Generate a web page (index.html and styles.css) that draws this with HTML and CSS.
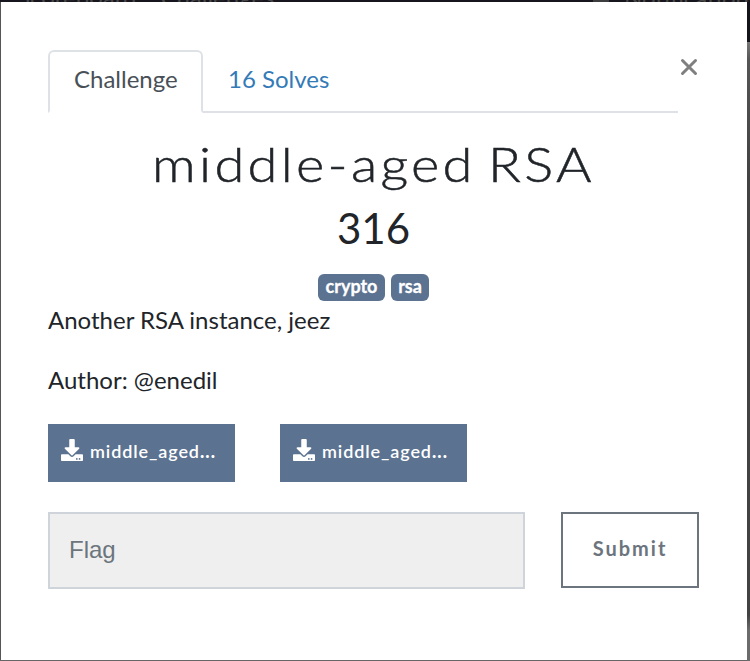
FILE: index.html
```html
<!DOCTYPE html>
<html lang="en">
<head>
<meta charset="utf-8">
<title>middle-aged RSA</title>
<link rel="stylesheet" href="styles.css">
</head>
<body>
<div class="backdrop-nav" aria-hidden="true"><span class="nav-left"><span>Scoreboard</span><span>Challenges</span></span><span class="nav-dot"></span><span class="nav-right">Notifications</span></div>
<main class="modal">
  <header class="top">
    <nav class="tabs">
      <a class="tab active">Challenge</a>
      <a class="tab">16 Solves</a>
    </nav>
    <button class="close" aria-label="Close"><svg width="18" height="18" viewBox="0 0 18 18"><path d="M2.5 2.5L15.5 15.5M15.5 2.5L2.5 15.5"/></svg></button>
  </header>
  <h2 class="name">middle-aged RSA</h2>
  <h3 class="value">316</h3>
  <div class="tags"><span class="tag crypto">crypto</span><span class="tag rsa">rsa</span></div>
  <div class="description">
    <p>Another RSA instance, jeez</p>
    <p>Author: @enedil</p>
  </div>
  <div class="files">
    <a class="file"><svg width="22" height="22" viewBox="0 0 512 512"><path d="M216 0h80c13 0 24 11 24 24v168h88c18 0 27 21 14 34L270 378c-8 8-20 8-28 0L90 226c-13-13-4-34 14-34h88V24c0-13 11-24 24-24zm296 376v112c0 13-11 24-24 24H24c-13 0-24-11-24-24V376c0-13 11-24 24-24h147l49 49c20 20 52 20 72 0l49-49h147c13 0 24 11 24 24zM388 464a20 20 0 1 0-40 0 20 20 0 1 0 40 0zm64 0a20 20 0 1 0-40 0 20 20 0 1 0 40 0z"/></svg><span class="filename">middle_aged<b>...</b></span></a>
    <a class="file"><svg width="22" height="22" viewBox="0 0 512 512"><path d="M216 0h80c13 0 24 11 24 24v168h88c18 0 27 21 14 34L270 378c-8 8-20 8-28 0L90 226c-13-13-4-34 14-34h88V24c0-13 11-24 24-24zm296 376v112c0 13-11 24-24 24H24c-13 0-24-11-24-24V376c0-13 11-24 24-24h147l49 49c20 20 52 20 72 0l49-49h147c13 0 24 11 24 24zM388 464a20 20 0 1 0-40 0 20 20 0 1 0 40 0zm64 0a20 20 0 1 0-40 0 20 20 0 1 0 40 0z"/></svg><span class="filename">middle_aged<b>...</b></span></a>
  </div>
  <form class="answer">
    <input class="flag" type="text" placeholder="Flag">
    <button class="submit" type="button">Submit</button>
  </form>
</main>
</body>
</html>
```

FILE: styles.css
```css
* { box-sizing: border-box; }
body {
  margin: 0;
  height: 661px;
  padding: 2px 3px 1px 1px;
  overflow: hidden;
  position: relative;
  background: linear-gradient(#14151c 42px, #777 42px, #555 60px, #424242 180px, #424242 615px, #6b6b6b 630px);
  font-family: Lato, "Liberation Sans", sans-serif;
  font-size: 24px;
  color: #212529;
}
.backdrop-nav {
  position: absolute;
  inset: 0 0 auto 0;
  height: 2px;
  overflow: hidden;
  background: #17151d;
  color: #484848;
  font-size: 24px;
  line-height: 24px;
}
.nav-left { position: absolute; left: 17px; top: -15px; display: flex; gap: 24px; }
.nav-dot { position: absolute; left: 593px; top: 0; width: 16px; height: 2px; background: #3d3d3f; }
.nav-right { position: absolute; left: 624px; top: -14px; }
.modal {
  position: relative;
  height: 658px;
  padding: 48px 48px 0 47px;
  background: #fff;
  box-shadow: 0 1px 0 #666, -1px 0 0 #555;
}
.top { display: flex; justify-content: space-between; height: 63px; }
.tabs { display: flex; width: 630px; border-bottom: 2px solid #dee2e6; }
.tab {
  height: 63px;
  padding: 0 24px;
  border: 2px solid transparent;
  border-radius: 6px 6px 0 0;
  line-height: 54px;
  color: #337ab7;
  white-space: nowrap;
}
.tab.active { width: 155px; border-color: #dee2e6 #dee2e6 #fff; background: #fff; color: #495057; }
.tab:last-child { margin-left: -1px; }
.close { height: 18px; width: 18px; margin: 8px 1px 0 0; padding: 0; border: 0; background: none; }
.close svg { display: block; stroke: #7f7f7f; stroke-width: 3; fill: none; stroke-linecap: round; }
.name {
  margin: 22px 0 0;
  height: 58px;
  line-height: 58px;
  font-size: 48px;
  font-weight: 300;
  letter-spacing: 2.9px;
  word-spacing: -5px;
  text-align: center;
  white-space: nowrap;
  transform: scaleX(1.13);
  -webkit-text-stroke: 0.5px #212529;
}
.value { margin: 9px 0 0; height: 52px; line-height: 52px; font-size: 42px; font-weight: 400; text-align: center; }
.tags { display: flex; justify-content: center; gap: 6px; margin-top: 20px; }
.tag {
  height: 27px;
  border-radius: 6px;
  background: #5b7290;
  color: #fff;
  font-size: 18px;
  font-weight: 700;
  line-height: 25px;
  text-align: center;
  -webkit-text-stroke: 0.3px #fff;
}
.crypto { width: 67px; }
.rsa { width: 38px; }
.description p { margin: 0 0 24px; height: 36px; line-height: 38px; }
.files { display: flex; gap: 45px; margin-top: 27px; }
.file {
  display: flex;
  gap: 7px;
  width: 187px;
  height: 58px;
  padding: 15px 0 0 13px;
  background: #5b7290;
  color: #fff;
}
.file svg { flex: none; fill: #fff; }
.filename { font-size: 18px; font-weight: 600; line-height: 25px; letter-spacing: 0.9px; white-space: nowrap; }
.filename b { font-weight: 900; letter-spacing: 1.1px; }
.answer { display: flex; gap: 36px; margin-top: 30px; }
.flag {
  width: 477px;
  height: 77px;
  padding: 0 19px 2px;
  border: 2px solid #ced4da;
  border-radius: 0;
  background: #efefef;
  font: 24px "Liberation Sans", sans-serif;
}
.flag::placeholder { color: #6c757d; opacity: 1; }
.submit {
  width: 138px;
  height: 76px;
  padding: 0 0 4px;
  border: 2px solid #6c757d;
  background: #fff;
  color: #6c757d;
  font: 700 20px Lato, sans-serif;
  letter-spacing: 2px;
}
```
